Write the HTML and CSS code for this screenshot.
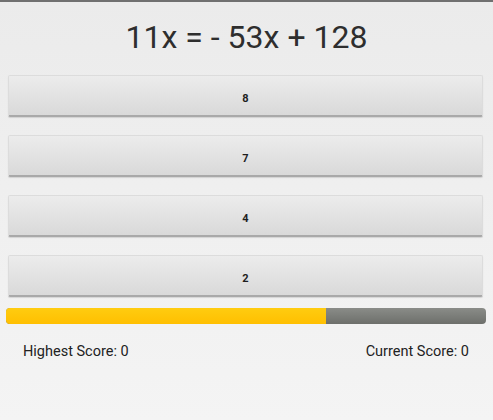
FILE: index.html
```html
<!DOCTYPE html>
<html>
<head>
<meta charset="utf-8">
<link rel="stylesheet" href="styles.css">
</head>
<body>
<div class="screen">
  <h1 class="equation">11x = - 53x + 128</h1>
  <div class="answers">
    <button class="answer">8</button>
    <button class="answer">7</button>
    <button class="answer">4</button>
    <button class="answer">2</button>
  </div>
  <div class="progress"><div class="progress-fill" style="width: 66.7%"></div></div>
  <div class="scores">
    <span class="score">Highest Score: 0</span>
    <span class="score">Current Score: 0</span>
  </div>
</div>
</body>
</html>
```
FILE: styles.css
```css
html, body {
  margin: 0;
  padding: 0;
}
body {
  width: 493px;
  height: 420px;
  overflow: hidden;
  font-family: Roboto, "Liberation Sans", sans-serif;
  background: linear-gradient(#ebebeb, #f4f4f4);
}
.screen {
  border-top: 2px solid #707070;
  padding-top: 15px;
  display: flex;
  flex-direction: column;
}
.equation {
  margin: 0;
  height: 40px;
  line-height: 40px;
  font-size: 32px;
  font-weight: 400;
  text-align: center;
  color: #2e2e2e;
}
.answers {
  display: flex;
  flex-direction: column;
  gap: 18px;
  margin: 18px 10px 0 8px;
}
.answer {
  height: 42px;
  box-sizing: border-box;
  border: 1px solid #dcdcdc;
  border-bottom: 2px solid #a9a9a9;
  border-radius: 2px;
  background: linear-gradient(#ececec, #d9d9d9);
  box-shadow: 0 1px 1px rgba(0,0,0,0.12);
  font-family: Roboto, "Liberation Sans", sans-serif;
  font-size: 11px;
  font-weight: 700;
  color: #1e1e1e;
  padding: 6px 0 0 0;
  margin: 0;
}
.progress {
  margin: 11px 7px 0 6px;
  height: 16px;
  border-radius: 4px;
  background: linear-gradient(#8a8c88, #6d6f6b);
  overflow: hidden;
  display: flex;
}
.progress-fill {
  height: 100%;
  background: linear-gradient(#ffcc10, #ffbf00);
}
.scores {
  display: flex;
  justify-content: space-between;
  padding: 19px 24px 0 23px;
}
.score {
  font-size: 14.5px;
  line-height: 17px;
  color: #222;
}
```
